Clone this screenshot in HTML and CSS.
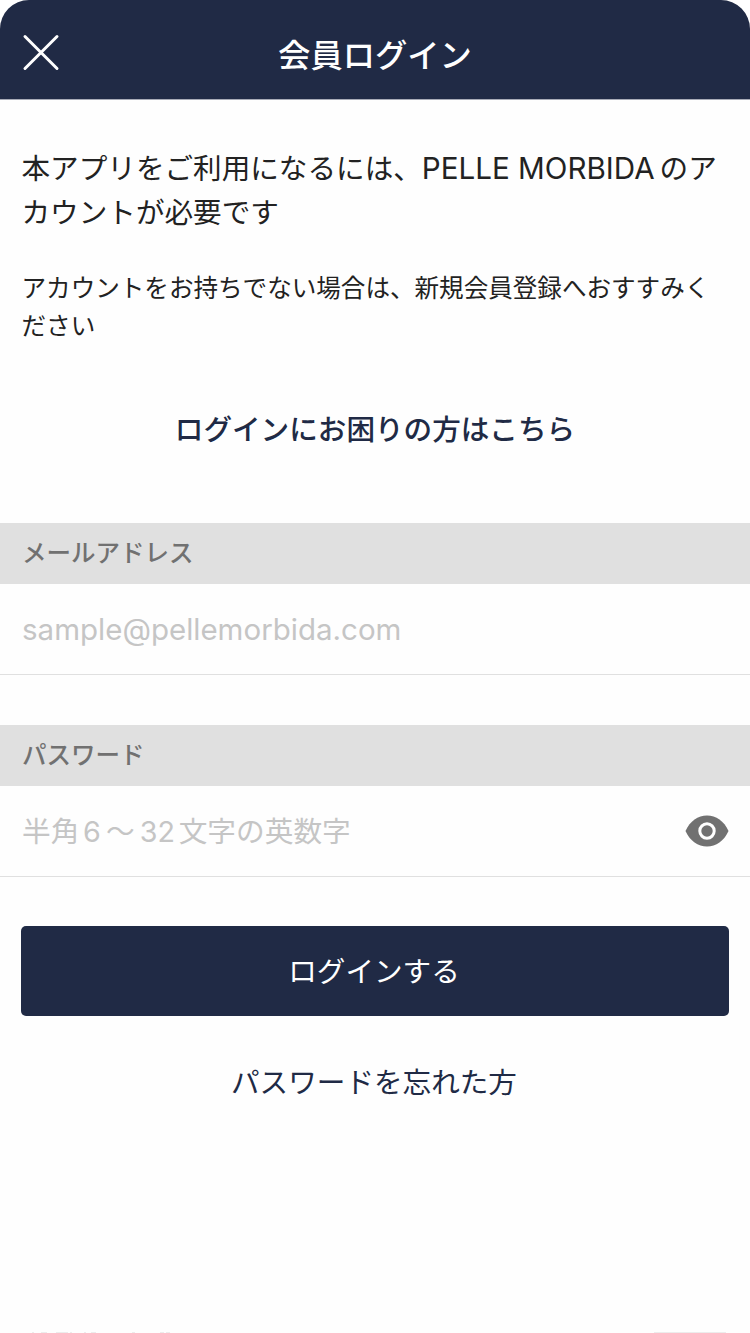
FILE: index.html
```
<!DOCTYPE html>
<html lang="ja">
<head>
    <meta charset="UTF-8">
    <meta name="viewport" content="width=device-width, initial-scale=1.0">
    <title>会員ログイン</title>
    <link rel="stylesheet" href="styles.css">
</head>
<body>
    <div class="screen">
        <header class="header">
            <button class="close-button" aria-label="閉じる">
                <svg width="38" height="38" viewBox="0 0 38 38">
                    <path d="M3 2.5L35 34.5M35 2.5L3 34.5" fill="none" stroke="#fff" stroke-width="3" stroke-linecap="round"/>
                </svg>
            </button>
            <h1>会員ログイン</h1>
        </header>

        <div class="intro">
            <p class="lead">本アプリをご利用になるには、<span class="brand">PELLE MORBIDA</span>のア<br>カウントが必要です</p>
            <p class="note">アカウントをお持ちでない場合は、新規会員登録へおすすみく<br>ださい</p>
        </div>

        <a class="help-link">ログインにお困りの方はこちら</a>

        <form class="login-form">
            <label class="field-label" for="email">メールアドレス</label>
            <div class="field">
                <input id="email" type="email" placeholder="sample@pellemorbida.com">
            </div>

            <label class="field-label" for="password">パスワード</label>
            <div class="field">
                <input id="password" type="password" placeholder="半角6&thinsp;〜&thinsp;32文字の英数字">
                <svg class="eye" width="44" height="32" viewBox="0 0 44 32">
                    <path d="M0.5 16C5 6 13 0.5 22 0.5S39 6 43.5 16C39 26 31 31.5 22 31.5S5 26 0.5 16Z" fill="#717171"/>
                    <circle cx="22" cy="16" r="7.2" fill="#717171" stroke="#fff" stroke-width="3"/>
                </svg>
            </div>

            <button type="button" class="submit-button">ログインする</button>
        </form>

        <a class="forgot-link">パスワードを忘れた方</a>

        <!-- 下に続く行の上端 -->
        <div class="next-row">
            <svg width="750" height="2" viewBox="0 0 750 2">
                <path d="M32 1.5h2M41 1.5h6M56 1.5h12M70 1.5h2M84 1.5h2M91 1.5h5M132 1.5h3M160 1.5h4M166 1.5h4M654 1.5h72" stroke="#ececec" stroke-width="1"/>
            </svg>
        </div>
    </div>
</body>
</html>
```

FILE: styles.css
```
* {
    box-sizing: border-box;
}

body {
    font-family: 'Inter', 'Noto Sans CJK JP', sans-serif;
    margin: 0;
    background: #fff;
    color: #222;
}

.screen {
    display: flex;
    flex-direction: column;
    height: 1333px;
    background: #fefefe;
    border-radius: 29px 29px 0 0;
    overflow: hidden;
}

.header {
    display: grid;
    grid-template-columns: 82px 1fr 82px;
    align-items: center;
    height: 99px;
    flex-shrink: 0;
    padding-top: 6px;
    background: #202a45;
    box-shadow: 0 1px 0 #a8abb7;
    color: #fff;
}

.header h1 {
    margin: 0;
    padding-top: 6px;
    font-size: 32.3px;
    font-weight: 500;
    line-height: 48px;
    text-align: center;
}

.close-button {
    display: flex;
    padding: 0 0 0 22px;
    border: none;
    background: none;
}

.intro {
    padding: 48px 0 0 21.5px;
    white-space: nowrap;
}

.lead {
    margin: 0;
    font-size: 28.6px;
    line-height: 44px;
}

.brand {
    margin-right: 5px;
    font-size: 29.6px;
    line-height: 1;
}

.note {
    margin: 34px 0 0;
    font-size: 24.57px;
    line-height: 38px;
}

.help-link {
    margin-top: 63px;
    color: #202a45;
    font-size: 28.6px;
    font-weight: 500;
    line-height: 44px;
    text-align: center;
}

.login-form {
    display: flex;
    flex-direction: column;
    margin-top: 71px;
}

.field-label {
    height: 61px;
    padding-left: 22px;
    background: #e0e0e0;
    color: #717171;
    font-size: 24.5px;
    font-weight: 500;
    line-height: 61px;
}

.field {
    display: flex;
    align-items: center;
    height: 91px;
    margin-bottom: 50px;
    padding: 0 21px 0 22px;
    border-bottom: 1px solid #e0e0e0;
}

.field input {
    flex: 1;
    height: 60px;
    padding: 0;
    border: none;
    outline: none;
    background: none;
    font-family: inherit;
    font-size: 28.7px;
    text-autospace: normal;
}

#email {
    font-size: 29.5px;
}

.field input::placeholder {
    color: #c5c5c5;
    text-autospace: normal;
}

.submit-button {
    height: 90px;
    margin: -1px 21px 0;
    padding: 0 2px 3px 0;
    border: none;
    border-radius: 5px;
    background: #202a45;
    color: #fff;
    font-family: inherit;
    font-size: 28.6px;
}

.forgot-link {
    margin-top: 45px;
    padding-right: 2px;
    color: #202a45;
    font-size: 28.6px;
    line-height: 44px;
    text-align: center;
}

.next-row {
    display: flex;
    margin-top: auto;
}
```
